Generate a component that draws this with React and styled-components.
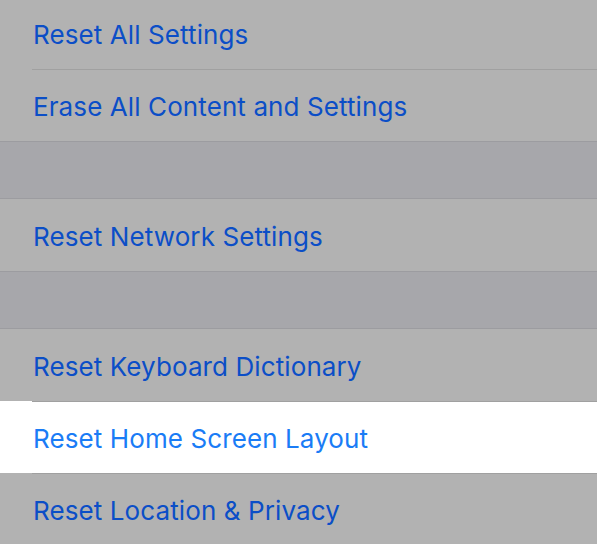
import React from "react";
import styled, { createGlobalStyle } from "styled-components";

const GlobalStyle = createGlobalStyle`
  html, body {
    margin: 0;
    padding: 0;
    background: #b2b2b2;
  }
  body {
    font-family: Inter, "Noto Sans", sans-serif;
    -webkit-font-smoothing: antialiased;
  }
`;

const Page = styled.div`
  width: 597px;
  height: 544px;
  overflow: hidden;
  display: flex;
  flex-direction: column;
  background: #a7a7ab;
`;

const Group = styled.div`
  display: flex;
  flex-direction: column;
  flex-shrink: 0;
  border-bottom: 1px solid #9c9ca0;
  border-top: ${(p) => (p.$first ? "none" : "1px solid #9c9ca0")};
  margin-top: ${(p) => (p.$first ? "-3px" : "0")};
`;

const Row = styled.div`
  height: 72px;
  box-sizing: border-box;
  padding: 4px 0 0 33px;
  flex-shrink: 0;
  display: flex;
  align-items: center;
  background: ${(p) => (p.$active ? "#ffffff" : "#b2b2b2")};
  position: relative;

  &::before {
    content: "";
    position: absolute;
    top: 0;
    left: 32px;
    right: 0;
    height: 1px;
    background: #a0a0a0;
  }
  &:first-child::before {
    display: none;
  }
`;

const Label = styled.span`
  font-size: 26px;
  letter-spacing: 0.1px;
  color: ${(p) => (p.$active ? "#1a7cf6" : "#0b4ec7")};
  line-height: 1;
`;

const Gap = styled.div`
  height: 56px;
  flex-shrink: 0;
  background: #a7a7ab;
`;

const groups = [
  { items: ["Reset All Settings", "Erase All Content and Settings"] },
  { items: ["Reset Network Settings"] },
  {
    items: [
      "Reset Keyboard Dictionary",
      "Reset Home Screen Layout",
      "Reset Location & Privacy",
    ],
    active: 1,
  },
];

export default function App() {
  return (
    <>
      <GlobalStyle />
      <Page>
        {groups.map((g, gi) => (
          <React.Fragment key={gi}>
            {gi > 0 && <Gap />}
            <Group $first={gi === 0}>
              {g.items.map((item, i) => (
                <Row key={item} $active={g.active === i}>
                  <Label $active={g.active === i}>{item}</Label>
                </Row>
              ))}
            </Group>
          </React.Fragment>
        ))}
      </Page>
    </>
  );
}
